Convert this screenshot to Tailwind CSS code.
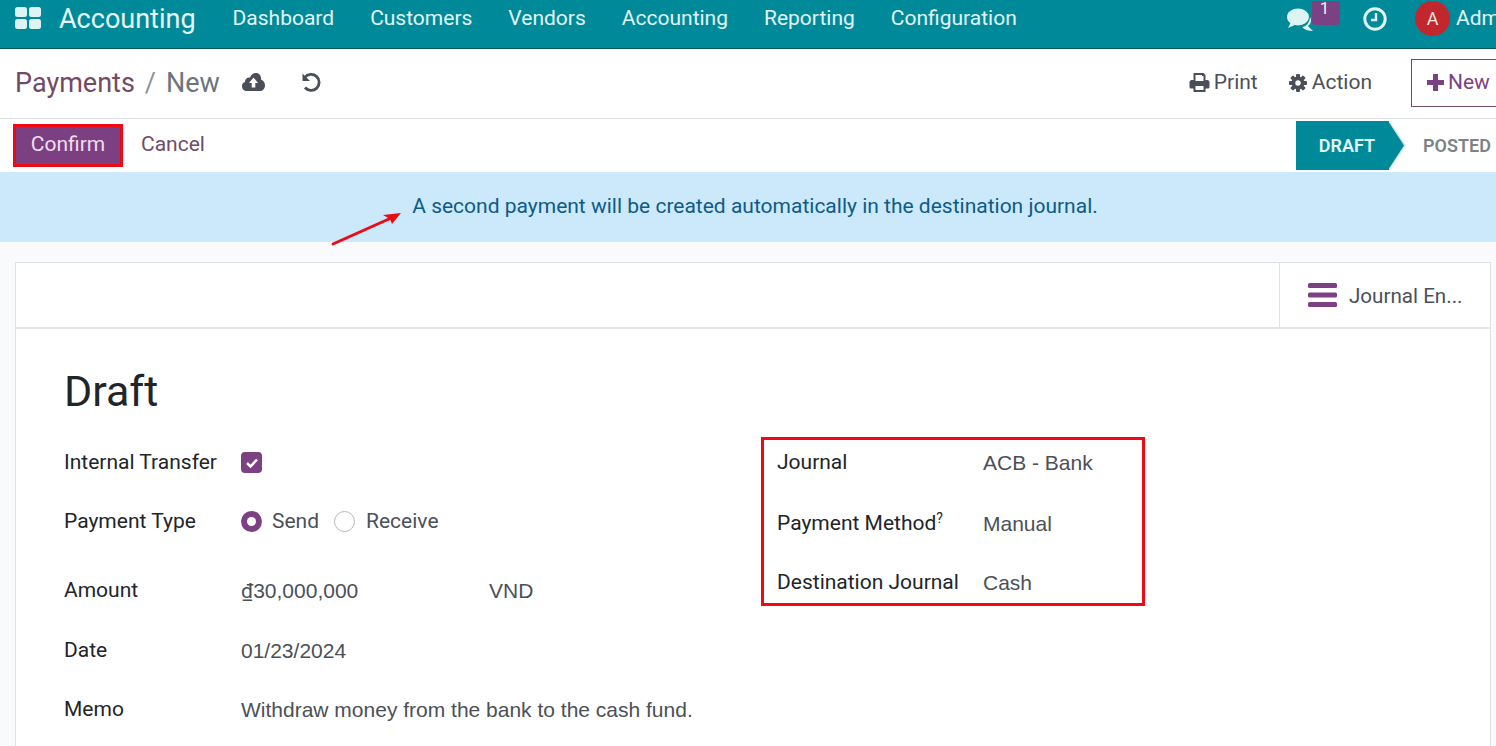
<!DOCTYPE html>
<html lang="en">
<head>
    <meta charset="UTF-8">
    <title>Payments / New</title>
    <script src="https://cdn.jsdelivr.net/npm/@tailwindcss/browser@4"></script>
</head>
<body class="relative h-[746px] w-[1496px] overflow-hidden bg-[#f9fafb] font-['Roboto',sans-serif] text-[21px] text-[#4b5058]">
    <!-- top nav -->
    <nav class="flex h-[49px] items-center overflow-hidden border-b border-[#0b5a63] bg-[#008a99] pb-[10px] text-[#e2f5f6]">
        <svg class="ml-[15px] mb-[3px] h-[22px] w-[26px]" viewBox="0 0 26 22" fill="#def3f4">
            <rect x="0" y="0" width="12" height="10" rx="2.5"/><rect x="14" y="0" width="12" height="10" rx="2.5"/>
            <rect x="0" y="12" width="12" height="10" rx="2.5"/><rect x="14" y="12" width="12" height="10" rx="2.5"/>
        </svg>
        <span class="ml-[18px] text-[27px] text-[#e8f7f8]">Accounting</span>
        <div class="ml-[37px] flex gap-[36px]">
            <span>Dashboard</span>
            <span>Customers</span>
            <span>Vendors</span>
            <span>Accounting</span>
            <span>Reporting</span>
            <span>Configuration</span>
        </div>
        <div class="ml-auto flex items-center">
            <svg class="mt-[1px] h-[26px] w-[27px]" viewBox="0 0 27 26" fill="#def3f4">
                <ellipse cx="11" cy="10" rx="11" ry="8.5"/><path d="M4 15 L1 21 L10 17Z"/>
                <path d="M23 10 C25 13 24 17 21 19 L26 24 C22 24 18 23 15 20 C19 20 23 15 23 10Z"/>
            </svg>
            <span class="-ml-[2px] flex h-[24px] w-[28px] items-start justify-center self-start rounded-b-[4px] bg-[#7c4183] pr-[3px] text-[17px] leading-[14px]">1</span>
            <svg class="mb-[1px] ml-[23px] h-[24px] w-[24px]" viewBox="0 0 24 24" fill="none" stroke="#e2f5f6">
                <circle cx="12" cy="12" r="10.2" stroke-width="3"/><path d="M13 6V13H8" stroke-width="2.4"/>
            </svg>
            <span class="mb-[1px] ml-[28px] flex h-[35px] w-[35px] items-center justify-center rounded-full bg-[#c1272d] text-[18px] text-[#f3e3e3]">A</span>
            <span class="ml-[6px] w-[40px] overflow-hidden">Admin</span>
        </div>
    </nav>

    <!-- breadcrumb and actions -->
    <header class="flex h-[70px] items-center border-b border-[#dee2e6] bg-white pl-[15px]">
        <span class="text-[27px] text-[#714b67]">Payments</span>
        <span class="ml-[10px] text-[27px] text-[#8d9399]">/</span>
        <span class="ml-[10px] text-[27px] text-[#6c757d]">New</span>
        <svg class="mb-[3px] ml-[22px] h-[18px] w-[23px]" viewBox="0 0 23 18">
            <path fill="#4b5058" d="M5 18 C2 18 0 16 0 13 C0 11 1 9.500 3 9 C3 5.500 5.500 4 8 4.500 C9 2 11 0 14 0 C17 0 19.500 2.500 19 6.500 C21.500 7.500 23 9.500 23 12.500 C23 16 20.500 18 18 18Z"/>
            <path fill="#fff" d="M11.500 4.500 L16 10 H13.300 V14.500 H9.700 V10 H7Z"/>
        </svg>
        <svg class="mb-[3px] ml-[36px] h-[20px] w-[20px]" viewBox="0 0 20 20" fill="none" stroke="#4b5058" stroke-width="2.800">
            <path d="M3.800 5.500 A8 8 0 1 1 4 15.500"/><path fill="#4b5058" stroke="none" d="M1.500 1.500 V9 H9Z"/>
        </svg>
        <div class="ml-auto flex h-full items-center pb-[2px]">
            <svg class="h-[19px] w-[21px]" viewBox="0 0 20 19" fill="#4b5058">
                <path fill-rule="evenodd" d="M4 0H14L16 2V7H18C19 7 20 8 20 9V14C20 15 19 15.500 18 15.500H16V19H4V15.500H2C1 15.500 0 15 0 14V9C0 8 1 7 2 7H4ZM6 2V8H14V3H12.500V2ZM6 13V17H14V13Z"/>
            </svg>
            <span class="ml-[4px]">Print</span>
            <svg class="ml-[31px] h-[18px] w-[18px]" viewBox="0 0 18 18" fill="#4b5058">
                <rect x="7" y="0" width="4" height="18" rx="1"/>
                <rect x="7" y="0" width="4" height="18" rx="1" transform="rotate(45 9 9)"/>
                <rect x="7" y="0" width="4" height="18" rx="1" transform="rotate(90 9 9)"/>
                <rect x="7" y="0" width="4" height="18" rx="1" transform="rotate(135 9 9)"/>
                <circle cx="9" cy="9" r="6.500"/><circle cx="9" cy="9" r="2.700" fill="#fff"/>
            </svg>
            <span class="ml-[5px]">Action</span>
            <button class="ml-[39px] flex h-[48px] w-[85px] items-center border border-r-0 border-[#714b67] pl-[15px] text-[#7c4183]">
                <svg class="h-[17px] w-[17px]" viewBox="0 0 17 17" fill="#7c4183"><path d="M6 0H11V6H17V11H11V17H6V11H0V6H6Z"/></svg>
                <span class="ml-[4px]">New</span>
            </button>
        </div>
    </header>

    <!-- status bar -->
    <div class="flex h-[53px] items-center bg-white pl-[16px]">
        <button class="flex h-[37px] w-[104px] items-center justify-center bg-[#7c3f82] pb-[2px] text-[#ecdfee] outline-[3px] outline-[#ec0b14]">Confirm</button>
        <button class="ml-[21px] pb-[2px] text-[#714b67]">Cancel</button>
        <div class="ml-auto mt-[2px] flex h-[49px] items-center self-start">
            <div class="relative flex h-full w-[93px] items-center justify-center bg-[#008a99] pb-[1px] pl-[9px] text-[18px] font-semibold text-[#e2f5f6]">
                DRAFT
                <span class="absolute left-[93px] top-0 h-full w-[17px] bg-[#c4e6ea] [clip-path:polygon(0_0,100%_50%,0_100%)]"></span>
                <span class="absolute left-[92px] top-0 h-full w-[16px] bg-[#008a99] [clip-path:polygon(0_0,100%_50%,0_100%)]"></span>
            </div>
            <span class="ml-[34px] w-[73px] overflow-hidden pb-[1px] text-[18px] font-semibold text-[#7d8287]">POSTED</span>
        </div>
    </div>

    <!-- alert -->
    <div class="flex h-[70px] items-center justify-center bg-[#cbe9fa] pl-[14px] text-[#0f5b85]">A second payment will be created automatically in the destination journal.</div>

    <!-- form sheet -->
    <main class="ml-[15px] mt-[20px] h-[520px] w-[1476px] border border-[#dee2e6] bg-white">
        <div class="flex h-[66px] justify-end border-b-2 border-[#e2e5e8]">
            <div class="flex w-[211px] items-center border-l border-[#dee2e6] pl-[28px]">
                <svg class="h-[24px] w-[29px]" viewBox="0 0 29 24" fill="#7c4183">
                    <rect y="0" width="29" height="5" rx="1.500"/><rect y="9.500" width="29" height="5" rx="1.500"/><rect y="19" width="29" height="5" rx="1.500"/>
                </svg>
                <span class="ml-[12px] mt-[3px] text-[20.6px]">Journal En...</span>
            </div>
        </div>
        <div class="px-[48px] pt-[36px]">
            <h1 class="text-[43px] leading-[52px] text-[#212529]">Draft</h1>
            <div class="mt-[32px] flex">
                <div class="w-[697px] text-[#212529]">
                    <div class="flex h-[59px] items-start">
                        <span class="w-[177px] leading-[26px]">Internal Transfer</span>
                        <span class="mt-[3px] flex h-[21px] w-[21px] items-center justify-center rounded-[4px] bg-[#7c4183]">
                            <svg class="h-[10px] w-[12px]" viewBox="0 0 12 10" fill="none" stroke="#fff" stroke-width="2.500"><path d="M1 5 L4.500 8.500 L11 1.500"/></svg>
                        </span>
                    </div>
                    <div class="flex h-[69px] items-start">
                        <span class="w-[177px] leading-[26px]">Payment Type</span>
                        <span class="mt-[3px] flex h-[21px] w-[21px] items-center justify-center rounded-full bg-[#7c4183]"><span class="h-[9px] w-[9px] rounded-full bg-white"></span></span>
                        <span class="ml-[10px] leading-[26px] text-[#4b5058]">Send</span>
                        <span class="ml-[15px] mt-[3px] h-[21px] w-[21px] rounded-full border border-[#b5b8bb]"></span>
                        <span class="ml-[11px] leading-[26px] text-[#4b5058]">Receive</span>
                    </div>
                    <div class="flex h-[60px] items-start">
                        <span class="w-[177px] leading-[26px]">Amount</span>
                        <span class="w-[248px] font-['Liberation_Sans',sans-serif] leading-[28px] text-[#4b5058]"><span class="font-['Roboto',sans-serif]">₫</span>30,000,000</span>
                        <span class="font-['Liberation_Sans',sans-serif] leading-[28px] text-[#4b5058]">VND</span>
                    </div>
                    <div class="flex h-[59px] items-start">
                        <span class="w-[177px] leading-[26px]">Date</span>
                        <span class="font-['Liberation_Sans',sans-serif] leading-[28px] text-[#4b5058]">01/23/2024</span>
                    </div>
                    <div class="flex items-start">
                        <span class="w-[177px] shrink-0 leading-[26px]">Memo</span>
                        <span class="whitespace-nowrap font-['Liberation_Sans',sans-serif] leading-[28px] text-[#4b5058]">Withdraw money from the bank to the cash fund.</span>
                    </div>
                </div>
                <div class="-mt-[12px] h-[169px] w-[384px] border-[3px] border-[#ec0b14] pl-[13px] pt-[9px] text-[#212529]">
                    <div class="flex h-[61px] items-start">
                        <span class="w-[206px] leading-[26px]">Journal</span>
                        <span class="font-['Liberation_Sans',sans-serif] leading-[28px] text-[#4b5058]">ACB - Bank</span>
                    </div>
                    <div class="flex h-[59px] items-start">
                        <span class="w-[206px] leading-[26px]">Payment Method<sup class="text-[14px]">?</sup></span>
                        <span class="font-['Liberation_Sans',sans-serif] leading-[28px] text-[#4b5058]">Manual</span>
                    </div>
                    <div class="flex items-start">
                        <span class="w-[206px] leading-[26px]">Destination Journal</span>
                        <span class="font-['Liberation_Sans',sans-serif] leading-[28px] text-[#4b5058]">Cash</span>
                    </div>
                </div>
            </div>
        </div>
    </main>

    <!-- annotation arrow -->
    <svg class="absolute left-[330px] top-[210px] h-[38px] w-[74px]" viewBox="0 0 74 38">
        <path d="M3 34 L60 8.500" stroke="#ec0b14" stroke-width="3" stroke-linecap="round"/>
        <path d="M71 3 L62 14 L60 9 L53 5Z" fill="#ec0b14"/>
    </svg>
</body>
</html>
